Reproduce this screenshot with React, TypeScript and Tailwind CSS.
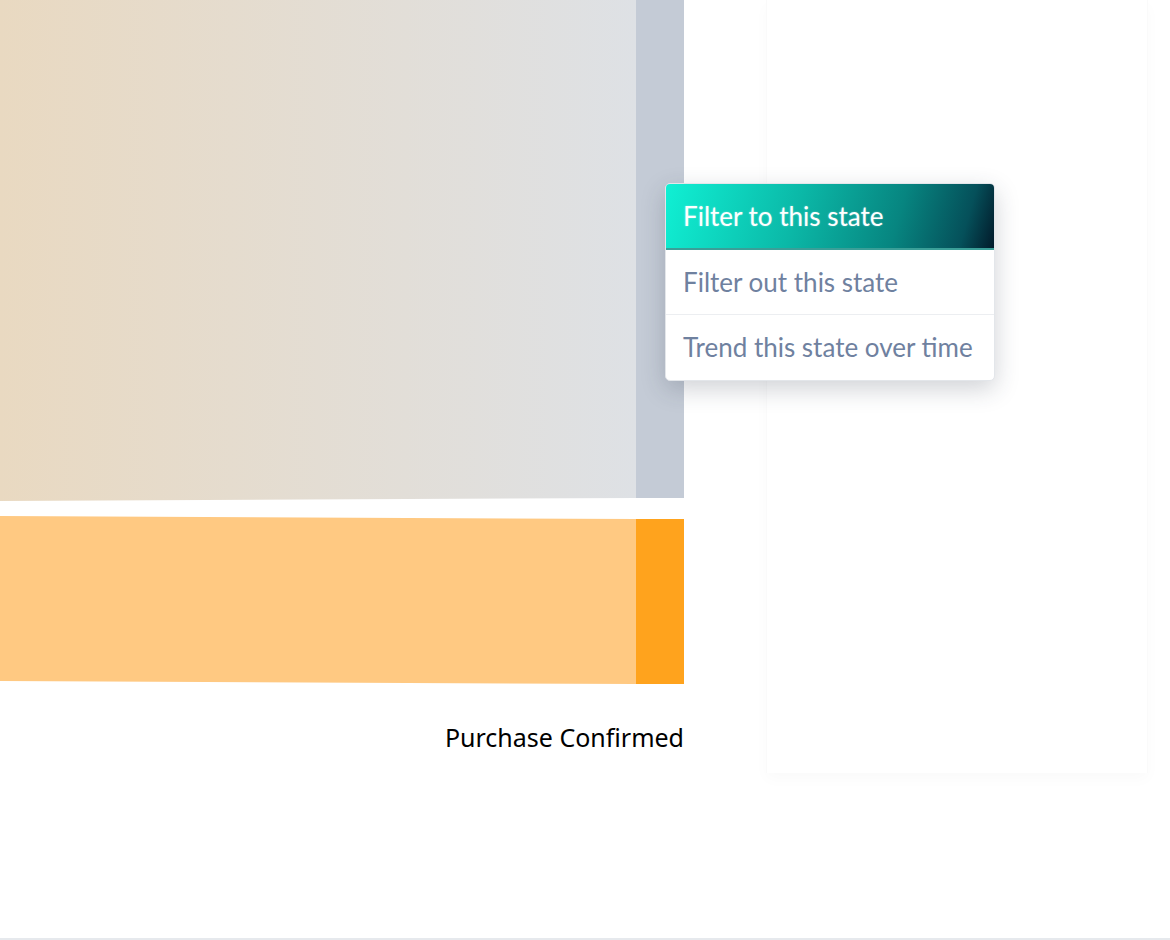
import React from "react";

function Sankey() {
  return (
    <svg width={684} height={684} viewBox="0 0 684 684" className="block">
      <defs>
        <linearGradient id="topFlow" x1="0" y1="0" x2="1" y2="0">
          <stop offset="0%" stopColor="#e9d9c1" />
          <stop offset="100%" stopColor="#dee1e5" />
        </linearGradient>
      </defs>
      <polygon points="0,0 636,0 636,498 0,501" fill="url(#topFlow)" />
      <rect x={636} y={0} width={48} height={498} fill="#c4cbd6" />
      <polygon points="0,516 636,519 636,684 0,681" fill="#ffc982" />
      <rect x={636} y={519} width={48} height={165} fill="#ffa31d" />
    </svg>
  );
}

export default function App() {
  const menuFont = { fontFamily: "Lato, 'Open Sans', sans-serif" };
  return (
    <div className="relative w-[1170px] h-[940px] bg-white overflow-hidden">
      <div className="flex items-start">
        <div className="flex flex-col w-[684px]">
          <Sankey />
          <div
            className="mt-[41px] text-right text-[25px] leading-none text-black"
            style={{ fontFamily: "'Noto Sans', 'Open Sans', sans-serif" }}
          >
            Purchase Confirmed
          </div>
        </div>
        <div className="ml-[82px] w-[382px] h-[773px] bg-white border-x border-[#fafafa] shadow-[0_6px_14px_rgba(0,0,0,0.025)]" />
      </div>

      <div className="absolute left-0 right-0 top-[938px] h-[2px] bg-[#e6e9ed]" />

      <div
        className="absolute left-[665px] top-[183px] w-[330px] rounded-[5px] border border-[#e3e6ea] bg-white overflow-hidden shadow-[0_8px_24px_rgba(40,50,70,0.22)]"
        style={menuFont}
      >
        <div className="h-[66px] flex items-center px-[17px] text-[26px] text-white bg-[linear-gradient(106deg,#10f0d4_0%,#0bb8a7_40%,#078580_70%,#05505a_90%,#021a2a_100%)] border-b-[2px] border-[#3a9f98] [text-shadow:0_0_2px_rgba(255,255,255,0.4)]">
          Filter to this state
        </div>
        <div className="h-[65px] flex items-center px-[17px] text-[26px] text-[#6f819f] border-b border-[#eceef1]">
          Filter out this state
        </div>
        <div className="h-[65px] flex items-center px-[17px] text-[26px] text-[#6f819f]">
          Trend this state over time
        </div>
      </div>
    </div>
  );
}
